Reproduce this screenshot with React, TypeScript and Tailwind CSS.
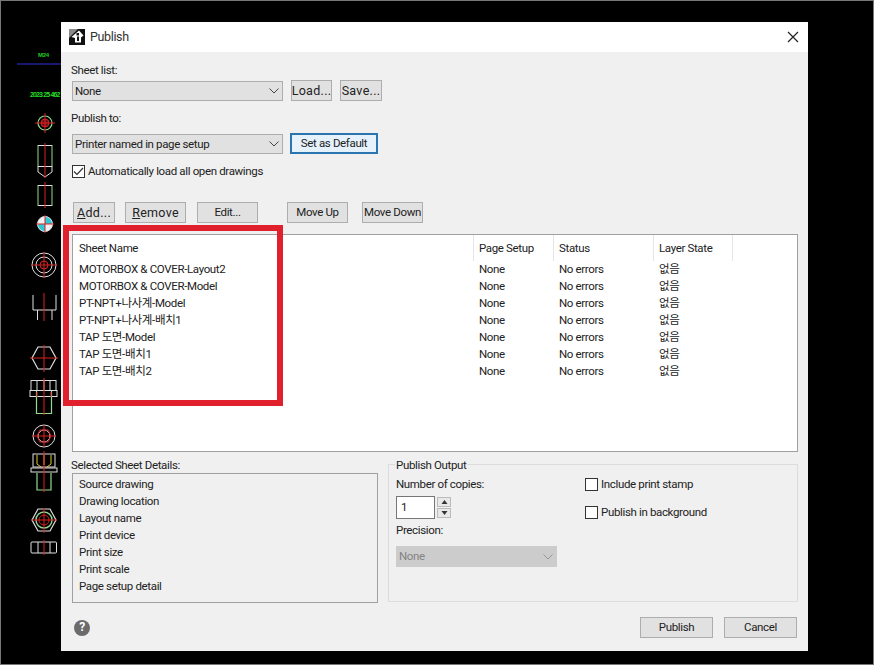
import React from "react";

const FONT = "[font-family:Roboto,'Noto_Sans_CJK_KR',sans-serif]";

const rows = [
  "MOTORBOX & COVER-Layout2",
  "MOTORBOX & COVER-Model",
  "PT-NPT+나사계-Model",
  "PT-NPT+나사계-배치1",
  "TAP 도면-Model",
  "TAP 도면-배치1",
  "TAP 도면-배치2",
];

const details = [
  "Source drawing",
  "Drawing location",
  "Layout name",
  "Print device",
  "Print size",
  "Print scale",
  "Page setup detail",
];

function Chevron({ color = "#444" }: { color?: string }) {
  return (
    <svg width="10" height="6" viewBox="0 0 10 6" className="shrink-0">
      <path d="M0.5 0.5 L5 5 L9.5 0.5" fill="none" stroke={color} strokeWidth="1" />
    </svg>
  );
}

function Combo({ label }: { label: string }) {
  return (
    <div className="flex h-[20px] w-[211px] items-center justify-between border border-[#adadad] bg-[#e1e1e1] pl-[2px] pr-[3px] text-[#222]">
      <span className="mt-[2px]">{label}</span>
      <Chevron />
    </div>
  );
}

function Btn({ w, children, className = "" }: { w: string; children: React.ReactNode; className?: string }) {
  return (
    <div className={`flex h-[21px] items-center justify-center whitespace-nowrap border border-[#adadad] bg-[#e1e1e1] text-[#222] ${w} ${className}`}>
      {children}
    </div>
  );
}

function Check({ checked = false }: { checked?: boolean }) {
  return (
    <div className="flex h-[13px] w-[13px] shrink-0 items-center justify-center border border-[#333] bg-white">
      {checked && (
        <svg width="11" height="9" viewBox="0 0 11 9">
          <path d="M1 4.5 L4 7.5 L10 1" fill="none" stroke="#333" strokeWidth="1.2" />
        </svg>
      )}
    </div>
  );
}

function Drawing() {
  const R = "#d82020";
  const W = "#e0e0e0";
  const G = "#8fdc8f";
  return (
    <svg width="60" height="663" viewBox="1 1 60 663" className="shrink-0">
      <text x="38" y="57" fontSize="6" fontWeight="bold" fill="#22cc22" fontFamily="Liberation Sans">M24</text>
      <line x1="17" y1="64" x2="61" y2="64" stroke="#3030e0" />
      <text x="30" y="97" fontSize="7" fontWeight="bold" fill="#22dd22" fontFamily="Liberation Sans" textLength="30">2023 25 462</text>
      <circle cx="45" cy="123" r="7" fill="none" stroke={G} strokeWidth="1.2" />
      <circle cx="45" cy="123" r="4" fill="#701018" stroke={R} />
      <path d="M35 123H55M45 113V133" stroke={R} />
      <rect x="38" y="145.500" width="14" height="21" fill="none" stroke={G} />
      <path d="M38 145.500H52M38 166.500H52V172L45 177L38 172V166.500" fill="none" stroke={W} />
      <path d="M45 143V178" stroke={R} />
      <rect x="38" y="185.500" width="14" height="20" fill="none" stroke={G} />
      <path d="M38 185.500H52M38 205.500H52" stroke={W} />
      <path d="M45 182V208" stroke={R} />
      <circle cx="45" cy="224" r="7.500" fill="#f0f0f0" />
      <path d="M45 224V216.500A7.500 7.500 0 0 1 52.500 224ZM45 224V231.500A7.500 7.500 0 0 1 37.500 224Z" fill="#2cc8d8" />
      <circle cx="45" cy="224" r="7.500" fill="none" stroke={W} />
      <path d="M36 224H54M45 215V233" stroke={R} />
      <circle cx="44" cy="265" r="12" fill="none" stroke={W} />
      <circle cx="44" cy="265" r="8" fill="none" stroke={W} />
      <circle cx="44" cy="265" r="4" fill="none" stroke={R} />
      <path d="M31 265H57M44 252V278" stroke={R} />
      <path d="M33 295V310H56V295M37.500 310V320M52 310V320" fill="none" stroke={W} />
      <path d="M44 293V321" stroke={R} />
      <path d="M38 347H50L56 358L50 369H38L32 358Z" fill="none" stroke={W} strokeWidth="1.2" />
      <path d="M30 358H58M44 345V372" stroke={R} />
      <rect x="31" y="380.500" width="25" height="10" fill="none" stroke={W} />
      <path d="M37 381V390M44 381V390M50 381V390" stroke={W} />
      <rect x="30" y="390.500" width="27" height="6" fill="none" stroke={W} />
      <path d="M36.500 391V413.500H51.500V391" fill="none" stroke={G} strokeWidth="1.2" />
      <path d="M44 378V415M37 392V397M51 392V397" stroke={R} />
      <circle cx="44" cy="436" r="11" fill="none" stroke={W} />
      <circle cx="44" cy="436" r="6" fill="none" stroke={W} />
      <path d="M37 436L40 430H48L51 436L48 442H40Z" fill="none" stroke={R} />
      <path d="M32 436H56M44 425V447" stroke={R} />
      <rect x="33" y="454" width="22" height="13" fill="none" stroke={W} />
      <path d="M37 455V464L41 467M51 455V464L47 467M44 455V465" fill="none" stroke="#e0d020" />
      <rect x="31" y="468" width="26" height="4" fill="none" stroke={W} />
      <path d="M37 473V490H51V473" fill="none" stroke={G} strokeWidth="1.2" />
      <path d="M44 451V492" stroke={R} />
      <path d="M38 509H50L56 520L50 531H38L32 520Z" fill="none" stroke={W} strokeWidth="1.2" />
      <circle cx="44" cy="520" r="8" fill="none" stroke={G} strokeWidth="1.4" />
      <circle cx="44" cy="520" r="5" fill="none" stroke={R} />
      <path d="M31 520H57M44 508V533" stroke={R} />
      <rect x="31" y="542" width="25.500" height="11" rx="1" fill="none" stroke={W} />
      <path d="M38 542V553M50 542V553" stroke={W} />
      <path d="M44 540V555" stroke={R} />
    </svg>
  );
}

function TitleIcon() {
  return (
    <svg width="16" height="16" viewBox="0 0 16 16" className="shrink-0">
      <rect width="16" height="16" fill="#111" />
      <path d="M0 0H9L0 9Z" fill="#8a8a8a" />
      <path d="M2.500 8L10 1.500L14.500 6.500L12 8.500V13.500H6V9Z" fill="#fff" />
      <path d="M7.500 4H10V6.500H7.500ZM8 7.500H10V12H8Z" fill="#111" />
    </svg>
  );
}

export default function App() {
  return (
    <div className={`relative flex h-[665px] w-[874px] overflow-hidden border border-[#777] bg-black text-[11.5px] leading-[17px] tracking-[-0.35px] text-[#222] ${FONT}`}>
      <Drawing />

      <div className="mt-[21px] flex h-[629px] w-[747px] shrink-0 flex-col bg-[#f0f0f0]">
        <div className="flex h-[30px] shrink-0 items-center justify-between bg-white pl-[8px] pr-[9px]">
          <div className="flex items-center gap-[5px] text-[12.5px] text-[#333]">
            <TitleIcon />
            <span className="-mt-[1px]">Publish</span>
          </div>
          <svg width="12" height="12" viewBox="0 0 12 12" className="-mt-[1px]">
            <path d="M1 1L11 11M11 1L1 11" stroke="#222" strokeWidth="1.2" />
          </svg>
        </div>

        <div className="flex flex-1 flex-col pl-[10px] pr-[10px]">
          <div className="mt-[10px] h-[17px]">Sheet list:</div>
          <div className="mt-[1px] flex items-center pl-[1px]">
            <Combo label="None" />
            <Btn w="w-[41px]" className="ml-[8px] text-[12.500px] tracking-[0.3px]">Load...</Btn>
            <Btn w="w-[42px]" className="ml-[8px] text-[12.500px] tracking-[0.3px]">Save...</Btn>
          </div>
          <div className="mt-[9px] h-[17px]">Publish to:</div>
          <div className="mt-[6px] flex items-center pl-[1px]">
            <Combo label="Printer named in page setup" />
            <div className="ml-[7px] flex h-[21px] w-[88px] items-center justify-center border-2 border-[#2a74b0] bg-[#e5f1fb]">
              Set as Default
            </div>
          </div>
          <div className="ml-[1px] mt-[9px] flex items-center gap-[3px]">
            <Check checked />
            <span>Automatically load all open drawings</span>
          </div>

          <div className="ml-[2px] mt-[22px] flex">
            <Btn w="w-[42px]" className="text-[12.500px] tracking-[0.3px]"><span><u>A</u>dd...</span></Btn>
            <Btn w="w-[61px]" className="ml-[10px] text-[12.500px] tracking-[0.3px]"><span><u>R</u>emove</span></Btn>
            <Btn w="w-[61px]" className="ml-[11px]">Edit...</Btn>
            <Btn w="w-[61px]" className="ml-[29px]">Move Up</Btn>
            <Btn w="w-[61px]" className="ml-[14px]">Move Down</Btn>
          </div>

          <div className="ml-[1px] mt-[11px] h-[218px] border border-[#a0a0a0] bg-white pl-[6px]">
            <div className="flex h-[26px] items-center">
              <div className="h-full w-[394px] pt-[5px]">Sheet Name</div>
              <div className="h-full w-[80px] border-l border-[#e5e5e5] pl-[5px] pt-[5px]">Page Setup</div>
              <div className="h-full w-[100px] border-l border-[#e5e5e5] pl-[5px] pt-[5px]">Status</div>
              <div className="h-full w-[80px] border-x border-[#e5e5e5] pl-[5px] pt-[5px]">Layer State</div>
            </div>
            <div className="flex flex-col">
              {rows.map((r) => (
                <div key={r} className="flex h-[17px] items-center">
                  <div className="w-[394px] whitespace-pre">{r}</div>
                  <div className="w-[80px] pl-[6px]">None</div>
                  <div className="w-[100px] pl-[6px]">No errors</div>
                  <div className="w-[80px] pl-[6px]">없음</div>
                </div>
              ))}
            </div>
          </div>

          <div className="mt-[12px] flex gap-[10px] pl-[1px]">
            <div className="w-[306px]">
              <div className="-ml-[1px] -mt-[7px] h-[17px]">Selected Sheet Details:</div>
              <div className="-mt-[1px] h-[130px] border border-[#a0a0a0] pl-[6px] pt-[2px]">
                {details.map((d) => (
                  <div key={d} className="h-[17px]">{d}</div>
                ))}
              </div>
            </div>

            <div className="relative h-[138px] w-[410px] border border-[#dcdcdc] pl-[7px] pt-[11px]">
              <span className="absolute -top-[8px] left-[6px] bg-[#f0f0f0] px-[1px]">Publish Output</span>
              <div className="flex">
                <div className="w-[189px]">
                  <div className="h-[17px]">Number of copies:</div>
                  <div className="mt-[3px] flex items-center gap-[2px]">
                    <div className="flex h-[23px] w-[39px] items-center border border-[#777] bg-white pl-[4px]">1</div>
                    <div className="flex flex-col gap-[1px]">
                      {["M4.500 2L7.500 6H1.500Z", "M1.500 2H7.500L4.500 6Z"].map((d) => (
                        <div key={d} className="flex h-[10px] w-[14px] items-center justify-center border border-[#bbb] bg-[#e8e8e8]">
                          <svg width="9" height="8" viewBox="0 0 9 8"><path d={d} fill="#333" /></svg>
                        </div>
                      ))}
                    </div>
                  </div>
                  <div className="mt-[3px] h-[17px]">Precision:</div>
                  <div className="mt-[7px] flex h-[21px] w-[161px] items-center justify-between bg-[#cccccc] pl-[3px] pr-[4px] text-[#838383]">
                    <span>None</span>
                    <Chevron color="#999" />
                  </div>
                </div>
                <div className="flex flex-col gap-[11px]">
                  <div className="flex h-[17px] items-center gap-[3px]">
                    <Check />
                    <span>Include print stamp</span>
                  </div>
                  <div className="flex h-[17px] items-center gap-[3px]">
                    <Check />
                    <span>Publish in background</span>
                  </div>
                </div>
              </div>
            </div>
          </div>

          <div className="mt-[14px] flex items-center justify-between pl-[3px] pr-[1px]">
            <div className="flex h-[16px] w-[16px] items-center justify-center rounded-full bg-[#6b6b6b] text-[12px] font-bold text-white">?</div>
            <div className="flex gap-[11px]">
              <Btn w="w-[73px]">Publish</Btn>
              <Btn w="w-[73px]">Cancel</Btn>
            </div>
          </div>
        </div>
      </div>

      <div className="absolute left-[62px] top-[224px] h-[181px] w-[220px] border-[6px] border-[#e0202c]" />
    </div>
  );
}
